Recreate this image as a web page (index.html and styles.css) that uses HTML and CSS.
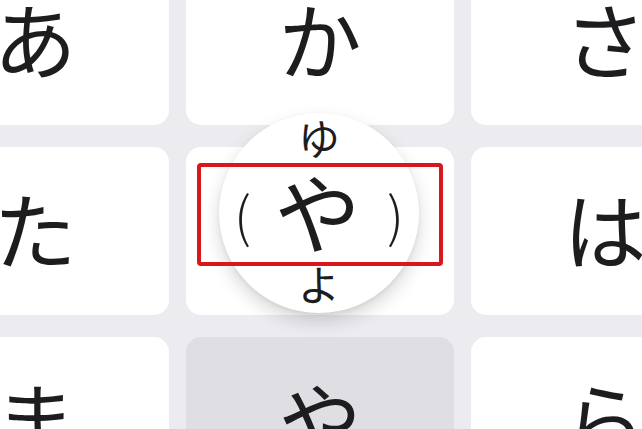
FILE: index.html
```html
<!DOCTYPE html>
<html lang="ja">
<head>
<meta charset="utf-8">
<link rel="stylesheet" href="styles.css">
</head>
<body>
<div class="stage">
  <div class="keys">
    <div class="key"><span>あ</span></div>
    <div class="key"><span>か</span></div>
    <div class="key"><span>さ</span></div>
    <div class="key"><span>た</span></div>
    <div class="key"><span></span></div>
    <div class="key"><span>は</span></div>
    <div class="key"><span>ま</span></div>
    <div class="key pressed"><span>や</span></div>
    <div class="key"><span>ら</span></div>
  </div>
  <div class="popup">
    <div class="flick small">ゆ</div>
    <div class="mid">
      <span class="paren">(</span>
      <span class="big">や</span>
      <span class="paren right">)</span>
    </div>
    <div class="flick small">よ</div>
  </div>
  <div class="highlight"></div>
</div>
</body>
</html>
```
FILE: styles.css
```css
html, body {
  margin: 0;
  padding: 0;
  background: #ecebf0;
}
body {
  width: 642px;
  height: 429px;
  overflow: hidden;
  font-family: "Noto Sans CJK JP", "Noto Sans", sans-serif;
  color: #1d1d1f;
}
.stage {
  position: relative;
  width: 642px;
  height: 429px;
  overflow: hidden;
}
.keys {
  display: grid;
  grid-template-columns: repeat(3, 268px);
  grid-template-rows: repeat(3, 168px);
  column-gap: 17px;
  row-gap: 22px;
  margin-left: -99px;
  transform: translateY(-43px);
}
.key {
  background: #ffffff;
  border-radius: 15px;
  display: flex;
  align-items: center;
  justify-content: center;
  font-size: 83px;
  line-height: 1;
}
.key span {
  display: block;
  margin-top: -8px;
}
.key.pressed {
  background: #dfdee3;
}
.popup {
  position: absolute;
  left: 219px;
  top: 113px;
  width: 200px;
  height: 200px;
  border-radius: 50%;
  background: #ffffff;
  box-shadow: 0 8px 18px rgba(0, 0, 0, 0.16), 0 2px 4px rgba(0, 0, 0, 0.06);
  display: flex;
  flex-direction: column;
  align-items: center;
  justify-content: center;
  gap: 13px;
}
.small {
  font-size: 42px;
  line-height: 40px;
  height: 40px;
  margin-top: -6px;
}
.mid {
  display: flex;
  align-items: center;
  height: 86px;
}
.big {
  font-size: 86px;
  line-height: 86px;
  margin-top: -6px;
  margin: -6px 22px 0 22px;
}
.big {
  margin-right: 25px;
}
.paren {
  width: 20px;
  text-align: center;
  font-size: 54px;
  font-weight: 300;
  line-height: 1;
  margin-top: 2px;
}
.highlight {
  position: absolute;
  left: 197px;
  top: 163px;
  width: 246px;
  height: 103px;
  box-sizing: border-box;
  border: 4px solid #d9161c;
  border-radius: 4px;
}
```
